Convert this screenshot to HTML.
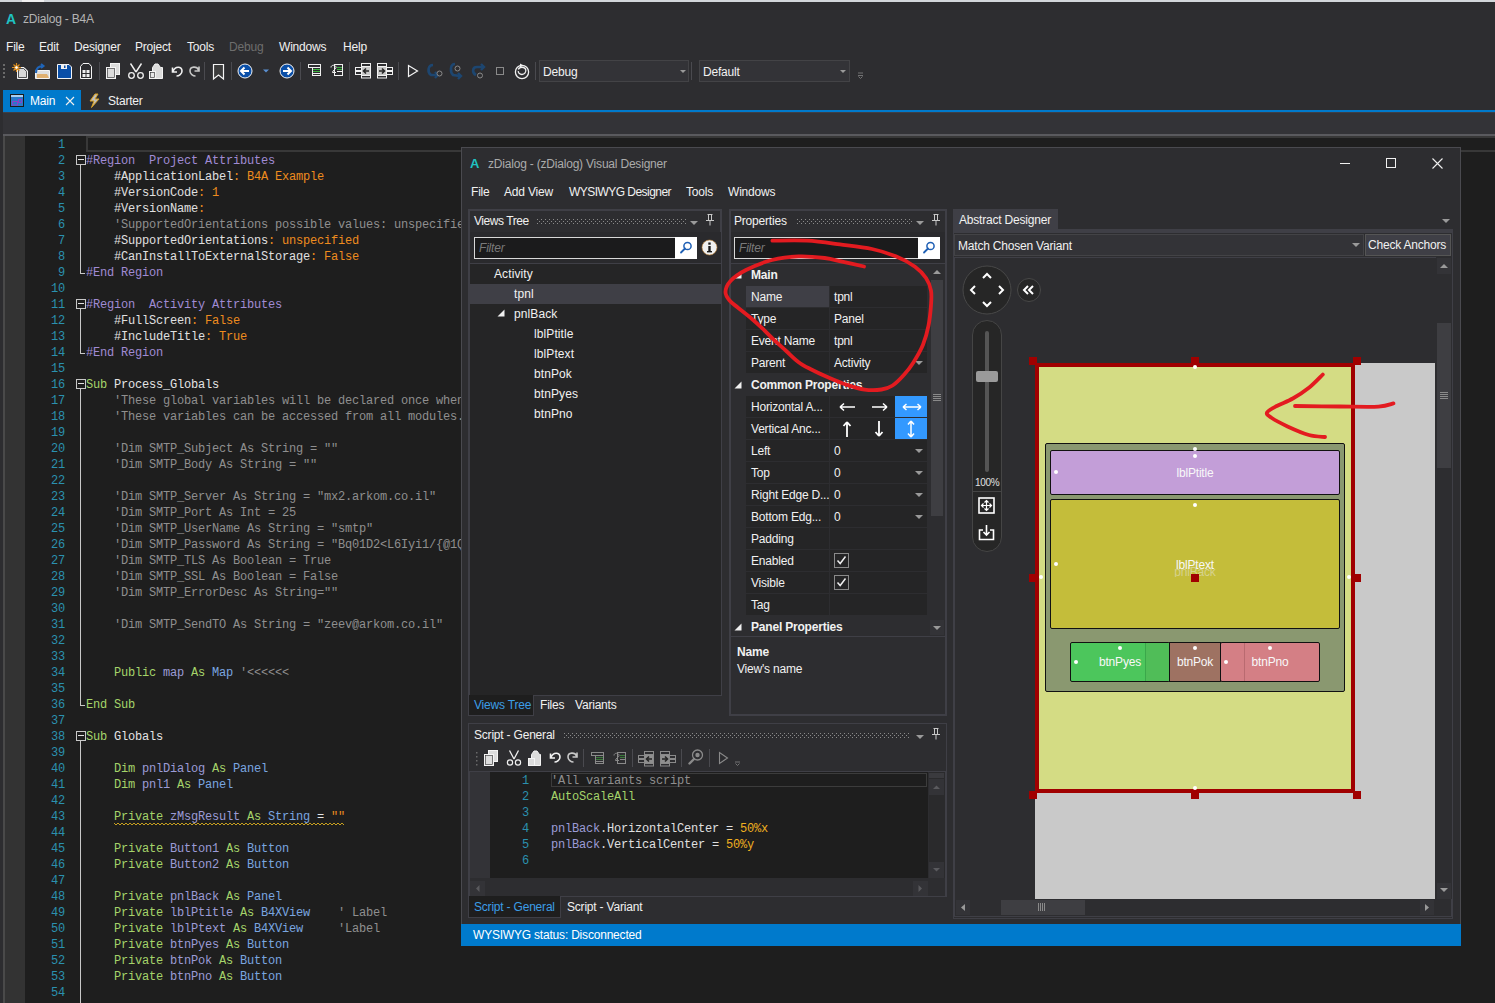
<!DOCTYPE html><html><head><meta charset="utf-8"><style>
*{margin:0;padding:0;box-sizing:border-box}
html,body{width:1495px;height:1003px;overflow:hidden;background:#2d2d30;position:relative}
body div, body svg{position:absolute}
.t{font-family:"Liberation Sans",sans-serif;font-size:12px;line-height:16px;color:#f1f1f1;white-space:pre;letter-spacing:-0.2px}
.m{font-family:"Liberation Mono",monospace;font-size:12px;line-height:16px;white-space:pre;letter-spacing:-0.2px;color:#dcdcdc}
</style></head><body>
<div style="left:0px;top:0px;width:1495px;height:2px;background:#d2d6da"></div>
<div style="left:22px;top:0px;width:22px;height:2px;background:#f0f0f0"></div>
<div class="t" style="left:6px;top:11px;color:#1fc2c2;font-weight:bold;font-size:14px">A</div>
<div class="t" style="left:23px;top:11px;color:#b4b4b4">zDialog - B4A</div>
<div class="t" style="left:6px;top:39px;">File</div>
<div class="t" style="left:39px;top:39px;">Edit</div>
<div class="t" style="left:74px;top:39px;">Designer</div>
<div class="t" style="left:135px;top:39px;">Project</div>
<div class="t" style="left:187px;top:39px;">Tools</div>
<div class="t" style="left:229px;top:39px;color:#6d6d6d">Debug</div>
<div class="t" style="left:279px;top:39px;">Windows</div>
<div class="t" style="left:343px;top:39px;">Help</div>
<div style="left:3px;top:90px;width:78px;height:22px;background:#007acc"></div>
<div style="left:3px;top:110px;width:1492px;height:2px;background:#007acc"></div>
<div class="t" style="left:30px;top:93px;color:#ffffff">Main</div>
<svg style="left:65px;top:96px" width="10" height="10"><path d="M1 1L9 9M9 1L1 9" stroke="#f0f0f0" stroke-width="1.1"/></svg>
<div class="t" style="left:108px;top:93px;color:#f1f1f1">Starter</div>
<div style="left:3px;top:112px;width:1492px;height:24px;background:#333337"></div>
<div style="left:3px;top:112px;width:1492px;height:1px;background:#3f3f46"></div>
<div style="left:3px;top:134px;width:1492px;height:2px;background:#5a5a5e"></div>
<div style="left:3px;top:136px;width:1492px;height:867px;background:#1e1e1e"></div>
<div style="left:3px;top:136px;width:2px;height:867px;background:#4a4a4a"></div>
<div style="left:5px;top:136px;width:20px;height:867px;background:#333333"></div>
<div style="left:86px;top:136px;width:1409px;height:16px;border:2px solid #383838;border-right:none"></div>
<div style="left:0;top:137px;width:461px;height:866px;overflow:hidden">
<div class="m" style="left:0;top:0px;width:65px;text-align:right;color:#2b91af">1</div>
<div class="m" style="left:0;top:16px;width:65px;text-align:right;color:#2b91af">2</div>
<div class="m" style="left:86px;top:16px"><span style="color:#a08bd4">#Region  Project Attributes</span></div>
<div class="m" style="left:0;top:32px;width:65px;text-align:right;color:#2b91af">3</div>
<div class="m" style="left:86px;top:32px"><span style="color:#e0e0e0">    #ApplicationLabel</span><span style="color:#ee8c1e">: B4A Example</span></div>
<div class="m" style="left:0;top:48px;width:65px;text-align:right;color:#2b91af">4</div>
<div class="m" style="left:86px;top:48px"><span style="color:#e0e0e0">    #VersionCode</span><span style="color:#ee8c1e">: 1</span></div>
<div class="m" style="left:0;top:64px;width:65px;text-align:right;color:#2b91af">5</div>
<div class="m" style="left:86px;top:64px"><span style="color:#e0e0e0">    #VersionName</span><span style="color:#ee8c1e">:</span></div>
<div class="m" style="left:0;top:80px;width:65px;text-align:right;color:#2b91af">6</div>
<div class="m" style="left:86px;top:80px"><span style="color:#8f8f8f">    &#x27;SupportedOrientations possible values: unspecified, landscape or portrait.</span></div>
<div class="m" style="left:0;top:96px;width:65px;text-align:right;color:#2b91af">7</div>
<div class="m" style="left:86px;top:96px"><span style="color:#e0e0e0">    #SupportedOrientations</span><span style="color:#ee8c1e">: unspecified</span></div>
<div class="m" style="left:0;top:112px;width:65px;text-align:right;color:#2b91af">8</div>
<div class="m" style="left:86px;top:112px"><span style="color:#e0e0e0">    #CanInstallToExternalStorage</span><span style="color:#ee8c1e">: False</span></div>
<div class="m" style="left:0;top:128px;width:65px;text-align:right;color:#2b91af">9</div>
<div class="m" style="left:86px;top:128px"><span style="color:#a08bd4">#End Region</span></div>
<div class="m" style="left:0;top:144px;width:65px;text-align:right;color:#2b91af">10</div>
<div class="m" style="left:0;top:160px;width:65px;text-align:right;color:#2b91af">11</div>
<div class="m" style="left:86px;top:160px"><span style="color:#a08bd4">#Region  Activity Attributes</span></div>
<div class="m" style="left:0;top:176px;width:65px;text-align:right;color:#2b91af">12</div>
<div class="m" style="left:86px;top:176px"><span style="color:#e0e0e0">    #FullScreen</span><span style="color:#ee8c1e">: False</span></div>
<div class="m" style="left:0;top:192px;width:65px;text-align:right;color:#2b91af">13</div>
<div class="m" style="left:86px;top:192px"><span style="color:#e0e0e0">    #IncludeTitle</span><span style="color:#ee8c1e">: True</span></div>
<div class="m" style="left:0;top:208px;width:65px;text-align:right;color:#2b91af">14</div>
<div class="m" style="left:86px;top:208px"><span style="color:#a08bd4">#End Region</span></div>
<div class="m" style="left:0;top:224px;width:65px;text-align:right;color:#2b91af">15</div>
<div class="m" style="left:0;top:240px;width:65px;text-align:right;color:#2b91af">16</div>
<div class="m" style="left:86px;top:240px"><span style="color:#a5d46a">Sub </span><span style="color:#e4e4e4">Process_Globals</span></div>
<div class="m" style="left:0;top:256px;width:65px;text-align:right;color:#2b91af">17</div>
<div class="m" style="left:86px;top:256px"><span style="color:#8f8f8f">    &#x27;These global variables will be declared once when the application starts.</span></div>
<div class="m" style="left:0;top:272px;width:65px;text-align:right;color:#2b91af">18</div>
<div class="m" style="left:86px;top:272px"><span style="color:#8f8f8f">    &#x27;These variables can be accessed from all modules.</span></div>
<div class="m" style="left:0;top:288px;width:65px;text-align:right;color:#2b91af">19</div>
<div class="m" style="left:0;top:304px;width:65px;text-align:right;color:#2b91af">20</div>
<div class="m" style="left:86px;top:304px"><span style="color:#8f8f8f">    &#x27;Dim SMTP_Subject As String = &quot;&quot;</span></div>
<div class="m" style="left:0;top:320px;width:65px;text-align:right;color:#2b91af">21</div>
<div class="m" style="left:86px;top:320px"><span style="color:#8f8f8f">    &#x27;Dim SMTP_Body As String = &quot;&quot;</span></div>
<div class="m" style="left:0;top:336px;width:65px;text-align:right;color:#2b91af">22</div>
<div class="m" style="left:0;top:352px;width:65px;text-align:right;color:#2b91af">23</div>
<div class="m" style="left:86px;top:352px"><span style="color:#8f8f8f">    &#x27;Dim SMTP_Server As String = &quot;mx2.arkom.co.il&quot;</span></div>
<div class="m" style="left:0;top:368px;width:65px;text-align:right;color:#2b91af">24</div>
<div class="m" style="left:86px;top:368px"><span style="color:#8f8f8f">    &#x27;Dim SMTP_Port As Int = 25</span></div>
<div class="m" style="left:0;top:384px;width:65px;text-align:right;color:#2b91af">25</div>
<div class="m" style="left:86px;top:384px"><span style="color:#8f8f8f">    &#x27;Dim SMTP_UserName As String = &quot;smtp&quot;</span></div>
<div class="m" style="left:0;top:400px;width:65px;text-align:right;color:#2b91af">26</div>
<div class="m" style="left:86px;top:400px"><span style="color:#8f8f8f">    &#x27;Dim SMTP_Password As String = &quot;Bq01D2&lt;L6Iyi1/{@1Q&quot;</span></div>
<div class="m" style="left:0;top:416px;width:65px;text-align:right;color:#2b91af">27</div>
<div class="m" style="left:86px;top:416px"><span style="color:#8f8f8f">    &#x27;Dim SMTP_TLS As Boolean = True</span></div>
<div class="m" style="left:0;top:432px;width:65px;text-align:right;color:#2b91af">28</div>
<div class="m" style="left:86px;top:432px"><span style="color:#8f8f8f">    &#x27;Dim SMTP_SSL As Boolean = False</span></div>
<div class="m" style="left:0;top:448px;width:65px;text-align:right;color:#2b91af">29</div>
<div class="m" style="left:86px;top:448px"><span style="color:#8f8f8f">    &#x27;Dim SMTP_ErrorDesc As String=&quot;&quot;</span></div>
<div class="m" style="left:0;top:464px;width:65px;text-align:right;color:#2b91af">30</div>
<div class="m" style="left:0;top:480px;width:65px;text-align:right;color:#2b91af">31</div>
<div class="m" style="left:86px;top:480px"><span style="color:#8f8f8f">    &#x27;Dim SMTP_SendTO As String = &quot;zeev@arkom.co.il&quot;</span></div>
<div class="m" style="left:0;top:496px;width:65px;text-align:right;color:#2b91af">32</div>
<div class="m" style="left:0;top:512px;width:65px;text-align:right;color:#2b91af">33</div>
<div class="m" style="left:0;top:528px;width:65px;text-align:right;color:#2b91af">34</div>
<div class="m" style="left:86px;top:528px"><span style="color:#a5d46a">    Public </span><span style="color:#9b9bd6">map </span><span style="color:#a5d46a">As </span><span style="color:#7aa6e0">Map </span><span style="color:#8f8f8f">&#x27;&lt;&lt;&lt;&lt;&lt;&lt;</span></div>
<div class="m" style="left:0;top:544px;width:65px;text-align:right;color:#2b91af">35</div>
<div class="m" style="left:0;top:560px;width:65px;text-align:right;color:#2b91af">36</div>
<div class="m" style="left:86px;top:560px"><span style="color:#a5d46a">End Sub</span></div>
<div class="m" style="left:0;top:576px;width:65px;text-align:right;color:#2b91af">37</div>
<div class="m" style="left:0;top:592px;width:65px;text-align:right;color:#2b91af">38</div>
<div class="m" style="left:86px;top:592px"><span style="color:#a5d46a">Sub </span><span style="color:#e4e4e4">Globals</span></div>
<div class="m" style="left:0;top:608px;width:65px;text-align:right;color:#2b91af">39</div>
<div class="m" style="left:0;top:624px;width:65px;text-align:right;color:#2b91af">40</div>
<div class="m" style="left:86px;top:624px"><span style="color:#a5d46a">    Dim </span><span style="color:#9b9bd6">pnlDialog </span><span style="color:#a5d46a">As </span><span style="color:#7aa6e0">Panel</span></div>
<div class="m" style="left:0;top:640px;width:65px;text-align:right;color:#2b91af">41</div>
<div class="m" style="left:86px;top:640px"><span style="color:#a5d46a">    Dim </span><span style="color:#9b9bd6">pnl1 </span><span style="color:#a5d46a">As </span><span style="color:#7aa6e0">Panel</span></div>
<div class="m" style="left:0;top:656px;width:65px;text-align:right;color:#2b91af">42</div>
<div class="m" style="left:0;top:672px;width:65px;text-align:right;color:#2b91af">43</div>
<div class="m" style="left:86px;top:672px"><span style="color:#a5d46a">    Private </span><span style="color:#9b9bd6">zMsgResult </span><span style="color:#a5d46a">As </span><span style="color:#7aa6e0">String </span><span style="color:#e4e4e4">= </span><span style="color:#ee8c1e">&quot;&quot;</span></div>
<div class="m" style="left:0;top:688px;width:65px;text-align:right;color:#2b91af">44</div>
<div class="m" style="left:0;top:704px;width:65px;text-align:right;color:#2b91af">45</div>
<div class="m" style="left:86px;top:704px"><span style="color:#a5d46a">    Private </span><span style="color:#9b9bd6">Button1 </span><span style="color:#a5d46a">As </span><span style="color:#7aa6e0">Button</span></div>
<div class="m" style="left:0;top:720px;width:65px;text-align:right;color:#2b91af">46</div>
<div class="m" style="left:86px;top:720px"><span style="color:#a5d46a">    Private </span><span style="color:#9b9bd6">Button2 </span><span style="color:#a5d46a">As </span><span style="color:#7aa6e0">Button</span></div>
<div class="m" style="left:0;top:736px;width:65px;text-align:right;color:#2b91af">47</div>
<div class="m" style="left:0;top:752px;width:65px;text-align:right;color:#2b91af">48</div>
<div class="m" style="left:86px;top:752px"><span style="color:#a5d46a">    Private </span><span style="color:#9b9bd6">pnlBack </span><span style="color:#a5d46a">As </span><span style="color:#7aa6e0">Panel</span></div>
<div class="m" style="left:0;top:768px;width:65px;text-align:right;color:#2b91af">49</div>
<div class="m" style="left:86px;top:768px"><span style="color:#a5d46a">    Private </span><span style="color:#9b9bd6">lblPtitle </span><span style="color:#a5d46a">As </span><span style="color:#7aa6e0">B4XView</span><span style="color:#8f8f8f">    &#x27; Label</span></div>
<div class="m" style="left:0;top:784px;width:65px;text-align:right;color:#2b91af">50</div>
<div class="m" style="left:86px;top:784px"><span style="color:#a5d46a">    Private </span><span style="color:#9b9bd6">lblPtext </span><span style="color:#a5d46a">As </span><span style="color:#7aa6e0">B4XView</span><span style="color:#8f8f8f">     &#x27;Label</span></div>
<div class="m" style="left:0;top:800px;width:65px;text-align:right;color:#2b91af">51</div>
<div class="m" style="left:86px;top:800px"><span style="color:#a5d46a">    Private </span><span style="color:#9b9bd6">btnPyes </span><span style="color:#a5d46a">As </span><span style="color:#7aa6e0">Button</span></div>
<div class="m" style="left:0;top:816px;width:65px;text-align:right;color:#2b91af">52</div>
<div class="m" style="left:86px;top:816px"><span style="color:#a5d46a">    Private </span><span style="color:#9b9bd6">btnPok </span><span style="color:#a5d46a">As </span><span style="color:#7aa6e0">Button</span></div>
<div class="m" style="left:0;top:832px;width:65px;text-align:right;color:#2b91af">53</div>
<div class="m" style="left:86px;top:832px"><span style="color:#a5d46a">    Private </span><span style="color:#9b9bd6">btnPno </span><span style="color:#a5d46a">As </span><span style="color:#7aa6e0">Button</span></div>
<div class="m" style="left:0;top:848px;width:65px;text-align:right;color:#2b91af">54</div>
<div style="left:76px;top:18px;width:10px;height:10px;border:1px solid #c8c8c8;background:#1e1e1e"></div>
<div style="left:78px;top:22px;width:6px;height:1px;background:#e0e0e0"></div>
<div style="left:80px;top:28px;width:1px;height:108px;background:#c8c8c8"></div>
<div style="left:80px;top:136px;width:5px;height:1px;background:#c8c8c8"></div>
<div style="left:76px;top:162px;width:10px;height:10px;border:1px solid #c8c8c8;background:#1e1e1e"></div>
<div style="left:78px;top:166px;width:6px;height:1px;background:#e0e0e0"></div>
<div style="left:80px;top:172px;width:1px;height:44px;background:#c8c8c8"></div>
<div style="left:80px;top:216px;width:5px;height:1px;background:#c8c8c8"></div>
<div style="left:76px;top:242px;width:10px;height:10px;border:1px solid #c8c8c8;background:#1e1e1e"></div>
<div style="left:78px;top:246px;width:6px;height:1px;background:#e0e0e0"></div>
<div style="left:80px;top:252px;width:1px;height:316px;background:#c8c8c8"></div>
<div style="left:80px;top:568px;width:5px;height:1px;background:#c8c8c8"></div>
<div style="left:76px;top:594px;width:10px;height:10px;border:1px solid #c8c8c8;background:#1e1e1e"></div>
<div style="left:78px;top:598px;width:6px;height:1px;background:#e0e0e0"></div>
<div style="left:80px;top:604px;width:1px;height:263px;background:#c8c8c8"></div>
<svg style="left:114px;top:685px" width="231" height="4"><path d="M0,1 L2,3 L4,1 L6,3 L8,1 L10,3 L12,1 L14,3 L16,1 L18,3 L20,1 L22,3 L24,1 L26,3 L28,1 L30,3 L32,1 L34,3 L36,1 L38,3 L40,1 L42,3 L44,1 L46,3 L48,1 L50,3 L52,1 L54,3 L56,1 L58,3 L60,1 L62,3 L64,1 L66,3 L68,1 L70,3 L72,1 L74,3 L76,1 L78,3 L80,1 L82,3 L84,1 L86,3 L88,1 L90,3 L92,1 L94,3 L96,1 L98,3 L100,1 L102,3 L104,1 L106,3 L108,1 L110,3 L112,1 L114,3 L116,1 L118,3 L120,1 L122,3 L124,1 L126,3 L128,1 L130,3 L132,1 L134,3 L136,1 L138,3 L140,1 L142,3 L144,1 L146,3 L148,1 L150,3 L152,1 L154,3 L156,1 L158,3 L160,1 L162,3 L164,1 L166,3 L168,1 L170,3 L172,1 L174,3 L176,1 L178,3 L180,1 L182,3 L184,1 L186,3 L188,1 L190,3 L192,1 L194,3 L196,1 L198,3 L200,1 L202,3 L204,1 L206,3 L208,1 L210,3 L212,1 L214,3 L216,1 L218,3 L220,1 L222,3 L224,1 L226,3 L228,1 L230,3" stroke="#c8a020" fill="none" stroke-width="1"/></svg>
</div>
<div style="left:461px;top:147px;width:1000px;height:799px;background:#2d2d30;border:1px solid #4a4a4f"></div>
<div class="t" style="left:470px;top:156px;color:#1fc2c2;font-weight:bold;font-size:13px">A</div>
<div class="t" style="left:488px;top:156px;color:#ababab">zDialog - (zDialog) Visual Designer</div>
<div style="left:1340px;top:163px;width:10px;height:1px;background:#f0f0f0"></div>
<div style="left:1386px;top:158px;width:10px;height:10px;border:1px solid #f0f0f0"></div>
<svg style="left:1432px;top:158px" width="11" height="11"><path d="M0.5 0.5L10.5 10.5M10.5 0.5L0.5 10.5" stroke="#f0f0f0" stroke-width="1.1"/></svg>
<div class="t" style="left:471px;top:184px;">File</div>
<div class="t" style="left:504px;top:184px;">Add View</div>
<div class="t" style="left:569px;top:184px;letter-spacing:-0.54px">WYSIWYG Designer</div>
<div class="t" style="left:686px;top:184px;">Tools</div>
<div class="t" style="left:728px;top:184px;">Windows</div>
<div style="left:468px;top:209px;width:254px;height:487px;background:#2d2d30;border:2px solid #3f3f46"></div>
<div class="t" style="left:474px;top:213px;letter-spacing:-0.45px">Views Tree</div>
<svg style="left:537px;top:219px" width="150" height="5"><defs><pattern id="dp537219" width="4" height="4" patternUnits="userSpaceOnUse"><rect x="0" y="0" width="1" height="1" fill="#8a8a8a"/><rect x="2" y="2" width="1" height="1" fill="#8a8a8a"/></pattern></defs><rect width="150" height="5" fill="url(#dp537219)"/></svg>
<div style="left:690px;top:221px;width:0;height:0;border-left:4px solid transparent;border-right:4px solid transparent;border-top:4px solid #9a9a9a"></div>
<svg style="left:705px;top:214px" width="10" height="12"><path d="M2.5 0.5H7.5M3.5 0.5V6.5M6.5 0.5V6.5M1 6.5H9M5 6.5V11.5" stroke="#c8c8c8" stroke-width="1" fill="none"/></svg>
<div style="left:470px;top:232px;width:251px;height:31px;background:#2a2a2d"></div>
<div style="left:474px;top:237px;width:223px;height:22px;background:#1b1b1c;border:1px solid #d8d8d8"></div>
<div class="t" style="left:479px;top:240px;color:#7a7a7a;font-style:italic">Filter</div>
<div style="left:675px;top:237px;width:22px;height:22px;background:#ffffff"></div>
<svg style="left:677px;top:239px" width="18" height="18"><circle cx="10.5" cy="7" r="3.6" stroke="#1e5fb4" stroke-width="1.5" fill="none"/><path d="M8 9.5L4 13.5" stroke="#1e5fb4" stroke-width="1.8" stroke-linecap="round"/></svg>
<svg style="left:701px;top:239px" width="18" height="18"><circle cx="8.5" cy="8.5" r="7.5" fill="#f0f0f0" stroke="#c08030" stroke-width="0.6"/><rect x="7.3" y="7" width="2.4" height="6" fill="#1a1a1a"/><rect x="7.3" y="3.5" width="2.4" height="2.2" fill="#1a1a1a"/><rect x="6" y="12" width="5" height="1.4" fill="#1a1a1a"/></svg>
<div style="left:470px;top:263px;width:251px;height:1px;background:#3f3f46"></div>
<div style="left:470px;top:264px;width:251px;height:431px;background:#252526"></div>
<div style="left:470px;top:284px;width:251px;height:20px;background:#3f3f46"></div>
<div class="t" style="left:494px;top:266px;letter-spacing:0.1px">Activity</div>
<div class="t" style="left:514px;top:286px;letter-spacing:0.1px">tpnl</div>
<div class="t" style="left:514px;top:306px;letter-spacing:0.1px">pnlBack</div>
<div class="t" style="left:534px;top:326px;letter-spacing:0.1px">lblPtitle</div>
<div class="t" style="left:534px;top:346px;letter-spacing:0.1px">lblPtext</div>
<div class="t" style="left:534px;top:366px;letter-spacing:0.1px">btnPok</div>
<div class="t" style="left:534px;top:386px;letter-spacing:0.1px">btnPyes</div>
<div class="t" style="left:534px;top:406px;letter-spacing:0.1px">btnPno</div>
<svg style="left:497px;top:309px" width="9" height="9"><path d="M7.5 0.5V7.5H0.5Z" fill="#f0f0f0"/></svg>
<div style="left:468px;top:695px;width:66px;height:21px;background:#1e1e1e;border:1px solid #3f3f46;border-top:none"></div>
<div class="t" style="left:474px;top:697px;color:#3c9de6">Views Tree</div>
<div class="t" style="left:540px;top:697px;">Files</div>
<div class="t" style="left:575px;top:697px;">Variants</div>
<div style="left:729px;top:209px;width:218px;height:507px;background:#2d2d30;border:2px solid #3f3f46"></div>
<div class="t" style="left:734px;top:213px;">Properties</div>
<svg style="left:797px;top:219px" width="115" height="5"><defs><pattern id="dp797219" width="4" height="4" patternUnits="userSpaceOnUse"><rect x="0" y="0" width="1" height="1" fill="#8a8a8a"/><rect x="2" y="2" width="1" height="1" fill="#8a8a8a"/></pattern></defs><rect width="115" height="5" fill="url(#dp797219)"/></svg>
<div style="left:916px;top:221px;width:0;height:0;border-left:4px solid transparent;border-right:4px solid transparent;border-top:4px solid #9a9a9a"></div>
<svg style="left:931px;top:214px" width="10" height="12"><path d="M2.5 0.5H7.5M3.5 0.5V6.5M6.5 0.5V6.5M1 6.5H9M5 6.5V11.5" stroke="#c8c8c8" stroke-width="1" fill="none"/></svg>
<div style="left:731px;top:232px;width:214px;height:31px;background:#2a2a2d"></div>
<div style="left:734px;top:237px;width:185px;height:22px;background:#1b1b1c;border:1px solid #d8d8d8"></div>
<div class="t" style="left:739px;top:240px;color:#7a7a7a;font-style:italic">Filter</div>
<div style="left:918px;top:237px;width:22px;height:22px;background:#ffffff"></div>
<svg style="left:920px;top:239px" width="18" height="18"><circle cx="10.5" cy="7" r="3.6" stroke="#1e5fb4" stroke-width="1.5" fill="none"/><path d="M8 9.5L4 13.5" stroke="#1e5fb4" stroke-width="1.8" stroke-linecap="round"/></svg>
<div style="left:731px;top:263px;width:214px;height:1px;background:#3f3f46"></div>
<div style="left:731px;top:264px;width:199px;height:371px;background:#2d2d30"></div>
<svg style="left:734px;top:271px" width="9" height="9"><path d="M7.5 0.5V7.5H0.5Z" fill="#f0f0f0"/></svg>
<div class="t" style="left:751px;top:267px;font-weight:bold">Main</div>
<div style="left:746px;top:286px;width:83px;height:21px;background:#3f3f46"></div>
<div style="left:830px;top:286px;width:97px;height:21px;background:#252526"></div>
<div class="t" style="left:751px;top:289px;">Name</div>
<div class="t" style="left:834px;top:289px;">tpnl</div>
<div style="left:746px;top:308px;width:83px;height:21px;background:#252526"></div>
<div style="left:830px;top:308px;width:97px;height:21px;background:#252526"></div>
<div class="t" style="left:751px;top:311px;">Type</div>
<div class="t" style="left:834px;top:311px;">Panel</div>
<div style="left:746px;top:330px;width:83px;height:21px;background:#252526"></div>
<div style="left:830px;top:330px;width:97px;height:21px;background:#252526"></div>
<div class="t" style="left:751px;top:333px;">Event Name</div>
<div class="t" style="left:834px;top:333px;">tpnl</div>
<div style="left:746px;top:352px;width:83px;height:21px;background:#252526"></div>
<div style="left:830px;top:352px;width:97px;height:21px;background:#252526"></div>
<div class="t" style="left:751px;top:355px;">Parent</div>
<div class="t" style="left:834px;top:355px;">Activity</div>
<div style="left:915px;top:361px;width:0;height:0;border-left:4px solid transparent;border-right:4px solid transparent;border-top:4px solid #9a9a9a"></div>
<svg style="left:734px;top:381px" width="9" height="9"><path d="M7.5 0.5V7.5H0.5Z" fill="#f0f0f0"/></svg>
<div class="t" style="left:751px;top:377px;font-weight:bold">Common Properties</div>
<div style="left:746px;top:396px;width:83px;height:21px;background:#252526"></div>
<div style="left:830px;top:396px;width:97px;height:21px;background:#252526"></div>
<div class="t" style="left:751px;top:399px;">Horizontal A...</div>
<div style="left:895px;top:396px;width:32px;height:21px;background:#3399ff"></div>
<svg style="left:838px;top:401px" width="90" height="12"><path d="M2 6H17M2 6L6 2.5M2 6L6 9.5" stroke="#fff" stroke-width="1.5" fill="none"/><path d="M34 6H49M49 6L45 2.5M49 6L45 9.5" stroke="#fff" stroke-width="1.5" fill="none"/><path d="M65 6H83M65 6L68.5 3M65 6L68.5 9M83 6L79.5 3M83 6L79.5 9" stroke="#fff" stroke-width="1.5" fill="none"/></svg>
<div style="left:746px;top:418px;width:83px;height:21px;background:#252526"></div>
<div style="left:830px;top:418px;width:97px;height:21px;background:#252526"></div>
<div class="t" style="left:751px;top:421px;">Vertical Anc...</div>
<div style="left:895px;top:418px;width:32px;height:21px;background:#3399ff"></div>
<svg style="left:838px;top:420px" width="90" height="18"><path d="M9 2V17M9 2L5.5 6M9 2L12.5 6" stroke="#fff" stroke-width="1.8" fill="none"/><path d="M41 1V16M41 16L37.5 12M41 16L44.5 12" stroke="#fff" stroke-width="1.8" fill="none"/><path d="M73 1V17M73 1L70 4.5M73 1L76 4.5M73 17L70 13.5M73 17L76 13.5" stroke="#fff" stroke-width="1.5" fill="none"/></svg>
<div style="left:746px;top:440px;width:83px;height:21px;background:#252526"></div>
<div style="left:830px;top:440px;width:97px;height:21px;background:#252526"></div>
<div class="t" style="left:751px;top:443px;">Left</div>
<div class="t" style="left:834px;top:443px;">0</div>
<div style="left:915px;top:449px;width:0;height:0;border-left:4px solid transparent;border-right:4px solid transparent;border-top:4px solid #9a9a9a"></div>
<div style="left:746px;top:462px;width:83px;height:21px;background:#252526"></div>
<div style="left:830px;top:462px;width:97px;height:21px;background:#252526"></div>
<div class="t" style="left:751px;top:465px;">Top</div>
<div class="t" style="left:834px;top:465px;">0</div>
<div style="left:915px;top:471px;width:0;height:0;border-left:4px solid transparent;border-right:4px solid transparent;border-top:4px solid #9a9a9a"></div>
<div style="left:746px;top:484px;width:83px;height:21px;background:#252526"></div>
<div style="left:830px;top:484px;width:97px;height:21px;background:#252526"></div>
<div class="t" style="left:751px;top:487px;">Right Edge D...</div>
<div class="t" style="left:834px;top:487px;">0</div>
<div style="left:915px;top:493px;width:0;height:0;border-left:4px solid transparent;border-right:4px solid transparent;border-top:4px solid #9a9a9a"></div>
<div style="left:746px;top:506px;width:83px;height:21px;background:#252526"></div>
<div style="left:830px;top:506px;width:97px;height:21px;background:#252526"></div>
<div class="t" style="left:751px;top:509px;">Bottom Edg...</div>
<div class="t" style="left:834px;top:509px;">0</div>
<div style="left:915px;top:515px;width:0;height:0;border-left:4px solid transparent;border-right:4px solid transparent;border-top:4px solid #9a9a9a"></div>
<div style="left:746px;top:528px;width:83px;height:21px;background:#252526"></div>
<div style="left:830px;top:528px;width:97px;height:21px;background:#252526"></div>
<div class="t" style="left:751px;top:531px;">Padding</div>
<div class="t" style="left:834px;top:531px;"></div>
<div style="left:746px;top:550px;width:83px;height:21px;background:#252526"></div>
<div style="left:830px;top:550px;width:97px;height:21px;background:#252526"></div>
<div class="t" style="left:751px;top:553px;">Enabled</div>
<svg style="left:834px;top:553px" width="16" height="16"><rect x="0.5" y="0.5" width="14" height="14" fill="none" stroke="#8a8a8a"/><path d="M3.5 7.5L6.2 10.5L11.5 3.5" stroke="#f0f0f0" stroke-width="1.5" fill="none"/></svg>
<div style="left:746px;top:572px;width:83px;height:21px;background:#252526"></div>
<div style="left:830px;top:572px;width:97px;height:21px;background:#252526"></div>
<div class="t" style="left:751px;top:575px;">Visible</div>
<svg style="left:834px;top:575px" width="16" height="16"><rect x="0.5" y="0.5" width="14" height="14" fill="none" stroke="#8a8a8a"/><path d="M3.5 7.5L6.2 10.5L11.5 3.5" stroke="#f0f0f0" stroke-width="1.5" fill="none"/></svg>
<div style="left:746px;top:594px;width:83px;height:21px;background:#252526"></div>
<div style="left:830px;top:594px;width:97px;height:21px;background:#252526"></div>
<div class="t" style="left:751px;top:597px;">Tag</div>
<div class="t" style="left:834px;top:597px;"></div>
<svg style="left:734px;top:623px" width="9" height="9"><path d="M7.5 0.5V7.5H0.5Z" fill="#f0f0f0"/></svg>
<div class="t" style="left:751px;top:619px;font-weight:bold">Panel Properties</div>
<div style="left:930px;top:264px;width:14px;height:371px;background:#2d2d30"></div>
<div style="left:931px;top:280px;width:12px;height:236px;background:#3e3e42"></div>
<svg style="left:931px;top:268px" width="12" height="8"><path d="M2 6L6 2L10 6Z" fill="#9a9a9a"/></svg>
<div style="left:930px;top:620px;width:14px;height:15px;background:#333337"></div>
<svg style="left:931px;top:624px" width="12" height="8"><path d="M2 2L6 6L10 2Z" fill="#9a9a9a"/></svg>
<div style="left:933px;top:394px;width:8px;height:1px;background:#8a8a8a"></div>
<div style="left:933px;top:396px;width:8px;height:1px;background:#8a8a8a"></div>
<div style="left:933px;top:398px;width:8px;height:1px;background:#8a8a8a"></div>
<div style="left:933px;top:400px;width:8px;height:1px;background:#8a8a8a"></div>
<div style="left:731px;top:636px;width:214px;height:1px;background:#3f3f46"></div>
<div class="t" style="left:737px;top:644px;font-weight:bold">Name</div>
<div class="t" style="left:737px;top:661px;">View's name</div>
<div style="left:468px;top:723px;width:479px;height:174px;background:#2d2d30;border:1px solid #3f3f46"></div>
<div class="t" style="left:474px;top:727px;">Script - General</div>
<svg style="left:564px;top:733px" width="345" height="5"><defs><pattern id="dp564733" width="4" height="4" patternUnits="userSpaceOnUse"><rect x="0" y="0" width="1" height="1" fill="#8a8a8a"/><rect x="2" y="2" width="1" height="1" fill="#8a8a8a"/></pattern></defs><rect width="345" height="5" fill="url(#dp564733)"/></svg>
<div style="left:916px;top:735px;width:0;height:0;border-left:4px solid transparent;border-right:4px solid transparent;border-top:4px solid #9a9a9a"></div>
<svg style="left:931px;top:728px" width="10" height="12"><path d="M2.5 0.5H7.5M3.5 0.5V6.5M6.5 0.5V6.5M1 6.5H9M5 6.5V11.5" stroke="#c8c8c8" stroke-width="1" fill="none"/></svg>
<div style="left:469px;top:771px;width:477px;height:126px;background:#2d2d30;border:1px solid #3f3f46"></div>
<div style="left:470px;top:772px;width:20px;height:106px;background:#333337"></div>
<div style="left:490px;top:772px;width:438px;height:106px;background:#1e1e1e"></div>
<div style="left:551px;top:773px;width:376px;height:14px;border:1px solid #3c3c3c"></div>
<div class="m" style="left:490px;top:773px;width:39px;text-align:right;color:#2b91af">1</div>
<div class="m" style="left:551px;top:773px"><span style="color:#8f8f8f">&#x27;All variants script</span></div>
<div class="m" style="left:490px;top:789px;width:39px;text-align:right;color:#2b91af">2</div>
<div class="m" style="left:551px;top:789px"><span style="color:#a5d46a">AutoScaleAll</span></div>
<div class="m" style="left:490px;top:805px;width:39px;text-align:right;color:#2b91af">3</div>
<div class="m" style="left:490px;top:821px;width:39px;text-align:right;color:#2b91af">4</div>
<div class="m" style="left:551px;top:821px"><span style="color:#9b9bd6">pnlBack</span><span style="color:#e0e0e0">.HorizontalCenter = </span><span style="color:#f0b020">50%x</span></div>
<div class="m" style="left:490px;top:837px;width:39px;text-align:right;color:#2b91af">5</div>
<div class="m" style="left:551px;top:837px"><span style="color:#9b9bd6">pnlBack</span><span style="color:#e0e0e0">.VerticalCenter = </span><span style="color:#f0b020">50%y</span></div>
<div class="m" style="left:490px;top:853px;width:39px;text-align:right;color:#2b91af">6</div>
<div style="left:929px;top:772px;width:16px;height:106px;background:#2a2a2c"></div>
<div style="left:929px;top:773px;width:15px;height:5px;background:#3a3a3e"></div>
<div style="left:929px;top:779px;width:15px;height:16px;background:#333337"></div>
<div style="left:929px;top:862px;width:15px;height:16px;background:#333337"></div>
<svg style="left:929px;top:779px" width="15" height="16"><path d="M4 10L7.5 6.5L11 10Z" fill="#5a5a5e"/></svg>
<svg style="left:929px;top:862px" width="15" height="16"><path d="M4 6L7.5 9.5L11 6Z" fill="#5a5a5e"/></svg>
<div style="left:470px;top:878px;width:475px;height:18px;background:#2d2d30"></div>
<div style="left:470px;top:881px;width:15px;height:15px;background:#333337"></div>
<div style="left:913px;top:881px;width:15px;height:15px;background:#333337"></div>
<svg style="left:470px;top:881px" width="15" height="15"><path d="M9.5 4L6 7.5L9.5 11Z" fill="#5a5a5e"/></svg>
<svg style="left:913px;top:881px" width="15" height="15"><path d="M5.5 4L9 7.5L5.5 11Z" fill="#5a5a5e"/></svg>
<div style="left:468px;top:896px;width:93px;height:22px;background:#1e1e1e;border:1px solid #3f3f46;border-top:none"></div>
<div class="t" style="left:474px;top:899px;color:#3c9de6">Script - General</div>
<div class="t" style="left:567px;top:899px;">Script - Variant</div>
<div style="left:953px;top:209px;width:105px;height:20px;background:#3f3f46"></div>
<div class="t" style="left:959px;top:212px;">Abstract Designer</div>
<div style="left:1442px;top:219px;width:0;height:0;border-left:4px solid transparent;border-right:4px solid transparent;border-top:4px solid #9a9a9a"></div>
<div style="left:953px;top:229px;width:500px;height:690px;background:#2d2d30;border:1px solid #3f3f46;border-top:4px solid #3f3f46"></div>
<div style="left:954px;top:234px;width:410px;height:22px;background:#333337;border:1px solid #434346"></div>
<div class="t" style="left:958px;top:238px;">Match Chosen Variant</div>
<div style="left:1352px;top:243px;width:0;height:0;border-left:4px solid transparent;border-right:4px solid transparent;border-top:4px solid #9a9a9a"></div>
<div style="left:1365px;top:234px;width:86px;height:22px;background:#3f3f46;border:1px solid #555"></div>
<div class="t" style="left:1368px;top:237px;">Check Anchors</div>
<div style="left:954px;top:257px;width:498px;height:660px;background:#2d2d30;border:1px solid #3f3f46"></div>
<div style="left:1035px;top:363px;width:400px;height:536px;background:#c9c9c9"></div>
<svg style="left:962px;top:265px" width="80" height="52"><circle cx="25" cy="25" r="24" fill="#262626" stroke="#484848"/><path d="M21 13L25 9L29 13M21 37L25 41L29 37M13 21L9 25L13 29M37 21L41 25L37 29" stroke="#fff" stroke-width="2" fill="none"/><circle cx="67" cy="25" r="11.5" fill="#262626" stroke="#484848"/><path d="M66 21L62 25L66 29M71 21L67 25L71 29" stroke="#fff" stroke-width="2" fill="none"/></svg>
<div style="left:972px;top:320px;width:30px;height:232px;background:#262626;border:1px solid #454545;border-radius:15px"></div>
<div style="left:985px;top:331px;width:4px;height:141px;background:#555;border-radius:2px"></div>
<div style="left:976px;top:371px;width:22px;height:11px;background:#9a9a9a;border-radius:2px"></div>
<div class="t" style="left:975px;top:475px;font-size:10px;color:#e0e0e0;letter-spacing:-0.3px">100%</div>
<div style="left:973px;top:491px;width:28px;height:1px;background:#454545"></div>
<svg style="left:978px;top:497px" width="18" height="18"><rect x="1" y="1" width="15" height="15" fill="none" stroke="#fff" stroke-width="1.6"/><path d="M8.5 3.5V13.5M3.5 8.5H13.5M6.5 5.5L8.5 3.5L10.5 5.5M6.5 11.5L8.5 13.5L10.5 11.5M5.5 6.5L3.5 8.5L5.5 10.5M11.5 6.5L13.5 8.5L11.5 10.5" stroke="#fff" stroke-width="1.2" fill="none"/></svg>
<svg style="left:978px;top:524px" width="18" height="18"><path d="M5 6H1.5V15.5H15.5V6H12" stroke="#fff" stroke-width="1.6" fill="none"/><path d="M8.5 1V11M5.5 8L8.5 11L11.5 8" stroke="#fff" stroke-width="1.6" fill="none"/></svg>
<div style="left:1436px;top:257px;width:16px;height:642px;background:#2d2d30"></div>
<div style="left:1437px;top:323px;width:14px;height:145px;background:#3e3e42"></div>
<div style="left:1437px;top:258px;width:14px;height:16px;background:#333337"></div>
<div style="left:1437px;top:883px;width:14px;height:16px;background:#333337"></div>
<svg style="left:1437px;top:261px" width="14" height="10"><path d="M3 7L7 3L11 7Z" fill="#9a9a9a"/></svg>
<svg style="left:1437px;top:885px" width="14" height="10"><path d="M3 3L7 7L11 3Z" fill="#9a9a9a"/></svg>
<div style="left:1440px;top:392px;width:8px;height:1px;background:#8a8a8a"></div>
<div style="left:1440px;top:394px;width:8px;height:1px;background:#8a8a8a"></div>
<div style="left:1440px;top:396px;width:8px;height:1px;background:#8a8a8a"></div>
<div style="left:1440px;top:398px;width:8px;height:1px;background:#8a8a8a"></div>
<div style="left:955px;top:899px;width:481px;height:17px;background:#2d2d30"></div>
<div style="left:1001px;top:900px;width:84px;height:15px;background:#3e3e42"></div>
<div style="left:956px;top:900px;width:14px;height:15px;background:#333337"></div>
<div style="left:1420px;top:900px;width:14px;height:15px;background:#333337"></div>
<svg style="left:956px;top:900px" width="14" height="15"><path d="M9 4L5 7.5L9 11Z" fill="#9a9a9a"/></svg>
<svg style="left:1420px;top:900px" width="14" height="15"><path d="M5 4L9 7.5L5 11Z" fill="#9a9a9a"/></svg>
<div style="left:1038px;top:903px;width:1px;height:8px;background:#8a8a8a"></div>
<div style="left:1040px;top:903px;width:1px;height:8px;background:#8a8a8a"></div>
<div style="left:1042px;top:903px;width:1px;height:8px;background:#8a8a8a"></div>
<div style="left:1044px;top:903px;width:1px;height:8px;background:#8a8a8a"></div>
<div style="left:1035px;top:363px;width:320px;height:430px;background:#d4dc84;border:4px solid #a00000"></div>
<div style="left:1029px;top:357px;width:8px;height:8px;background:#a00000"></div>
<div style="left:1191px;top:357px;width:8px;height:8px;background:#a00000"></div>
<div style="left:1353px;top:357px;width:8px;height:8px;background:#a00000"></div>
<div style="left:1029px;top:574px;width:8px;height:8px;background:#a00000"></div>
<div style="left:1353px;top:574px;width:8px;height:8px;background:#a00000"></div>
<div style="left:1029px;top:791px;width:8px;height:8px;background:#a00000"></div>
<div style="left:1191px;top:791px;width:8px;height:8px;background:#a00000"></div>
<div style="left:1353px;top:791px;width:8px;height:8px;background:#a00000"></div>
<div style="left:1045px;top:443px;width:300px;height:249px;background:#8a9870;border:1px solid #111;border-radius:2px"></div>
<div style="left:1050px;top:450px;width:290px;height:45px;background:#c39ed8;border:1px solid #111;border-radius:2px"></div>
<div class="t" style="left:1050px;top:465px;width:290px;text-align:center;color:#f8f8f8">lblPtitle</div>
<div style="left:1050px;top:499px;width:290px;height:130px;background:#c4bd3a;border:1px solid #111;border-radius:2px"></div>
<div style="left:1150px;top:567px;width:90px;height:10px;overflow:hidden"><div class="t" style="left:0;top:-3px;width:90px;text-align:center;color:#d6d28c">pnlBack</div></div>
<div class="t" style="left:1050px;top:557px;width:290px;text-align:center;color:#f8f8f8">lblPtext</div>
<div style="left:1191px;top:574px;width:8px;height:8px;background:#a00000"></div>
<div style="left:1070px;top:642px;width:100px;height:40px;background:#4cc65c;border:1px solid #111;border-radius:2px"></div>
<div style="left:1146px;top:643px;width:23px;height:38px;background:#50bd58"></div>
<div style="left:1145px;top:643px;width:1px;height:38px;background:#3aa84a"></div>
<div class="t" style="left:1070px;top:654px;width:100px;text-align:center;color:#f8f8f8">btnPyes</div>
<div style="left:1169px;top:642px;width:52px;height:40px;background:#9e7262;border:1px solid #111"></div>
<div class="t" style="left:1169px;top:654px;width:52px;text-align:center;color:#f8f8f8">btnPok</div>
<div style="left:1220px;top:642px;width:100px;height:40px;background:#d47f85;border:1px solid #111;border-radius:2px"></div>
<div style="left:1244px;top:643px;width:1px;height:38px;background:#b96a70"></div>
<div class="t" style="left:1220px;top:654px;width:100px;text-align:center;color:#f8f8f8">btnPno</div>
<div style="left:1193px;top:365px;width:4px;height:4px;background:#fff;border-radius:2px"></div>
<div style="left:1193px;top:447px;width:4px;height:4px;background:#fff;border-radius:2px"></div>
<div style="left:1193px;top:454px;width:4px;height:4px;background:#fff;border-radius:2px"></div>
<div style="left:1054px;top:470px;width:4px;height:4px;background:#fff;border-radius:2px"></div>
<div style="left:1193px;top:503px;width:4px;height:4px;background:#fff;border-radius:2px"></div>
<div style="left:1054px;top:562px;width:4px;height:4px;background:#fff;border-radius:2px"></div>
<div style="left:1193px;top:786px;width:4px;height:4px;background:#fff;border-radius:2px"></div>
<div style="left:1039px;top:575px;width:4px;height:4px;background:#fff;border-radius:2px"></div>
<div style="left:1347px;top:575px;width:4px;height:4px;background:#fff;border-radius:2px"></div>
<div style="left:1118px;top:646px;width:4px;height:4px;background:#fff;border-radius:2px"></div>
<div style="left:1074px;top:660px;width:4px;height:4px;background:#fff;border-radius:2px"></div>
<div style="left:1193px;top:646px;width:4px;height:4px;background:#fff;border-radius:2px"></div>
<div style="left:1224px;top:660px;width:4px;height:4px;background:#fff;border-radius:2px"></div>
<div style="left:1268px;top:646px;width:4px;height:4px;background:#fff;border-radius:2px"></div>
<div style="left:461px;top:924px;width:1000px;height:22px;background:#007acc"></div>
<div class="t" style="left:473px;top:927px;color:#ffffff">WYSIWYG status: Disconnected</div>
<svg style="left:0;top:0" width="1495" height="1003"><g stroke="#e31b20" stroke-width="3.8" fill="none" stroke-linecap="round" stroke-linejoin="round"><path d="M772.4 240.7 C778.2 240.7 795.7 240.1 807.0 240.7 C818.3 241.3 829.2 243.0 840.0 244.4 C850.8 245.8 862.7 247.0 872.0 249.0 C881.3 251.0 888.6 253.4 895.8 256.3 C903.0 259.2 910.0 263.1 915.0 266.7 C920.0 270.3 923.3 274.0 926.0 278.0 C928.7 282.0 930.2 286.1 931.0 290.6 C931.8 295.1 931.4 299.1 931.0 305.0 C930.6 310.9 929.8 319.1 928.5 325.7 C927.2 332.3 925.5 338.7 923.0 344.8 C920.5 350.9 916.6 357.4 913.4 362.4 C910.2 367.4 907.3 371.1 903.8 375.0 C900.3 378.9 896.3 383.1 892.6 385.5 C888.9 387.9 886.2 388.8 881.5 389.5 C876.8 390.2 870.4 390.4 864.5 389.6 C858.6 388.8 852.4 386.7 846.4 384.7 C840.4 382.7 834.4 380.1 828.4 377.5 C822.4 374.9 815.3 371.6 810.3 369.0 C805.3 366.4 802.3 364.9 798.3 361.9 C794.3 358.9 790.2 354.6 786.2 351.0 C782.2 347.4 778.2 344.0 774.2 340.2 C770.2 336.4 766.1 332.0 762.1 328.2 C758.1 324.4 754.0 320.7 750.0 317.3 C746.0 313.9 741.4 310.5 738.0 307.7 C734.6 304.9 731.7 303.1 729.6 300.5 C727.5 297.9 725.4 295.2 725.5 292.0 C725.6 288.8 727.1 284.7 730.5 281.0 C733.9 277.3 739.1 273.5 746.0 270.0 C752.9 266.5 763.2 262.3 772.0 260.0 C780.8 257.7 789.7 256.7 798.5 256.4 C807.3 256.1 817.5 257.1 824.7 258.0 C832.0 258.9 835.5 260.2 842.0 261.6 C848.5 263.0 860.3 265.7 864.0 266.5"/><path d="M1322.8 374.5 C1320.5 376.7 1313.9 383.8 1308.9 387.8 C1303.9 391.8 1298.2 395.5 1292.8 398.5 C1287.4 401.5 1281.1 403.7 1276.8 406.0 C1272.5 408.3 1267.9 410.5 1267.0 412.5 C1266.1 414.5 1268.0 415.5 1271.4 417.8 C1274.8 420.1 1281.2 423.5 1287.5 426.4 C1293.8 429.3 1302.7 433.2 1308.9 435.0 C1315.2 436.8 1322.3 436.7 1325.0 437.0"/><path d="M1295.0 406.0 C1302.5 406.1 1326.1 406.4 1340.0 406.5 C1353.9 406.6 1369.6 407.1 1378.5 406.6 C1387.4 406.1 1391.0 403.9 1393.5 403.4"/></g></svg>
<svg style="left:0;top:0" width="900" height="90"><rect x="3" y="64" width="2" height="2" fill="#6a6a6a"/><rect x="3" y="68" width="2" height="2" fill="#6a6a6a"/><rect x="3" y="72" width="2" height="2" fill="#6a6a6a"/><rect x="3" y="76" width="2" height="2" fill="#6a6a6a"/><path d="M17.5 67.5H24L27.5 71V78.5H17.5Z" fill="#e0e0e0" stroke="#f4f4f4"/><path d="M18.5 68.5H23.5L26.5 71.5V77.5H18.5Z" fill="#d8d8d8" stroke="#2d2d30" stroke-width="0.8"/><g stroke="#d98a1c" stroke-width="1.2"><path d="M16.5 63V72M12 67.5H21M13.5 64.5L19.5 70.5M19.5 64.5L13.5 70.5"/></g><circle cx="16.5" cy="67.5" r="1.8" fill="#fff" stroke="#d98a1c"/><path d="M35.5 70.5H49.5V78.5H35.5Z" fill="#dedede" stroke="#f4f4f4"/><path d="M37 74L47 74L49 78H37Z" fill="#e0b070"/><path d="M36 73C36 68 39 66 43 66M41 64L43.5 66L41 68" stroke="#1e64b8" stroke-width="2" fill="none"/><path d="M57.5 64.5H69L71.5 67V78.5H57.5Z" fill="#0a4fa8" stroke="#f4f4f4"/><rect x="61" y="65" width="6" height="4" fill="#f0f0f0"/><rect x="64" y="65.5" width="1.5" height="2.5" fill="#0a4fa8"/><path d="M80.5 66.5L83 63.5H89L91.5 66.5V78.5H80.5Z" fill="#2d2d30" stroke="#f4f4f4"/><rect x="82.5" y="70" width="3" height="3" fill="#f0f0f0"/><rect x="86.5" y="70" width="3" height="3" fill="#f0f0f0"/><rect x="82.5" y="74" width="3" height="3" fill="#f0f0f0"/><rect x="86.5" y="74" width="3" height="3" fill="#f0f0f0"/><path d="M99.5 62V80" stroke="#4a4a4f"/><path d="M204.5 62V80" stroke="#4a4a4f"/><path d="M231.5 62V80" stroke="#4a4a4f"/><path d="M300.5 62V80" stroke="#4a4a4f"/><path d="M349.5 62V80" stroke="#4a4a4f"/><path d="M398.5 62V80" stroke="#4a4a4f"/><path d="M535.5 62V80" stroke="#4a4a4f"/><path d="M691.5 62V80" stroke="#4a4a4f"/><rect x="110.5" y="63.5" width="9" height="11" fill="#dcdcdc" stroke="#f4f4f4"/><rect x="106.5" y="67.5" width="9" height="11" fill="#dcdcdc" stroke="#f4f4f4"/><rect x="107.5" y="68.5" width="7" height="9" fill="#dcdcdc" stroke="#2d2d30" stroke-width="0.6"/><path d="M130.5 63.5L136 72M141.5 63.5L136 72" stroke="#f0f0f0" stroke-width="1.4"/><circle cx="131.5" cy="75.5" r="2.8" fill="none" stroke="#f0f0f0" stroke-width="1.3"/><circle cx="140.5" cy="75.5" r="2.8" fill="none" stroke="#f0f0f0" stroke-width="1.3"/><path d="M152.5 67.5L155 64H158L160.5 67.5H162.5V78.5H152.5Z" fill="#dcdcdc" stroke="#f4f4f4"/><rect x="149.5" y="71.5" width="6" height="7" fill="#dcdcdc" stroke="#f4f4f4"/><rect x="150.5" y="72.5" width="4" height="5" fill="#e8e8e8" stroke="#2d2d30" stroke-width="0.6"/><path d="M172.5 67.5V72H177M173 71.5C175 66 182 66 182 71C182 74 179 76 176.5 76" stroke="#f0f0f0" stroke-width="1.6" fill="none"/><path d="M199 66.5V71H194.5M198.5 70C197 66 190 66 190 71C190 74 193 76 195.5 76" stroke="#c8c8c8" stroke-width="1.6" fill="none"/><path d="M213.5 64.5H223.5V79L218.5 75L213.5 79Z" fill="#3c3c3c" stroke="#f4f4f4" stroke-width="1.2"/><circle cx="245" cy="71" r="7" fill="#0a4fa8" stroke="#f4f4f4"/><path d="M249 71H241.5M244.5 67.5L241 71L244.5 74.5" stroke="#fff" stroke-width="2" fill="none"/><path d="M263 69.5H269L266 72.5Z" fill="#5a8fd0"/><circle cx="287" cy="71" r="7" fill="#0a4fa8" stroke="#f4f4f4"/><path d="M283 71H290.5M287.5 67.5L291 71L287.5 74.5" stroke="#fff" stroke-width="2" fill="none"/><g fill="none" stroke="#f0f0f0" stroke-width="1"><rect x="308.5" y="64.5" width="12" height="3"/><rect x="312.5" y="67.5" width="8" height="8"/></g><path d="M313 69.5H320M313 71.5H320" stroke="#3cb040" stroke-width="1"/><path d="M313 73.5H320" stroke="#f0f0f0" stroke-width="1"/><g fill="none" stroke="#f0f0f0" stroke-width="1"><rect x="334.5" y="64.5" width="8" height="11"/><path d="M331 67.5C331 64.5 336 64.5 336 67.5C336 69.5 332.5 70 332.5 72.5H336"/></g><path d="M337 67.5H342M337 69.5H342" stroke="#3cb040" stroke-width="1"/><path d="M337 71.5H342" stroke="#f0f0f0" stroke-width="1"/><g fill="#2d2d30" stroke="#f0f0f0" stroke-width="1"><rect x="361.5" y="63.5" width="9" height="3"/><rect x="355.5" y="67.5" width="15" height="3"/><rect x="355.5" y="71.5" width="15" height="3"/><rect x="361.5" y="75.5" width="9" height="2.5"/><rect x="361.5" y="66.5" width="9" height="9" fill="#c8c8c8"/></g><path d="M369 71H363.5M366 68.5L363.5 71L366 73.5" stroke="#262626" stroke-width="1.6" fill="none"/><g fill="#2d2d30" stroke="#f0f0f0" stroke-width="1"><rect x="377.5" y="63.5" width="9" height="3"/><rect x="377.5" y="67.5" width="15" height="3"/><rect x="377.5" y="71.5" width="15" height="3"/><rect x="377.5" y="75.5" width="9" height="2.5"/><rect x="377.5" y="66.5" width="9" height="9" fill="#c8c8c8"/></g><path d="M379 71H384.5M382 68.5L384.5 71L382 73.5" stroke="#262626" stroke-width="1.6" fill="none"/><path d="M408.5 65.5V76.5L417.5 71Z" fill="#2d2d30" stroke="#f4f4f4" stroke-width="1.2"/><path d="M433 65C428 65 427 72 431 75L437 75" stroke="#1d4670" stroke-width="2.6" fill="none"/><path d="M435 72L438 75L435 78" stroke="#1d4670" stroke-width="2.4" fill="none"/><circle cx="439.5" cy="73.5" r="2.5" fill="#2d2d30" stroke="#8a8a8a"/><path d="M455 64C450 64 450 72 453 75L460 76" stroke="#1d4670" stroke-width="2.6" fill="none"/><path d="M458 73L461 76L458 79" stroke="#1d4670" stroke-width="2.4" fill="none"/><circle cx="457.5" cy="68.5" r="2.5" fill="#2d2d30" stroke="#8a8a8a"/><path d="M476 75C472 73 472 67 477 67L483 67" stroke="#1d4670" stroke-width="2.6" fill="none"/><path d="M481 64L484 67L481 70" stroke="#1d4670" stroke-width="2.4" fill="none"/><circle cx="480" cy="75.5" r="2.5" fill="#2d2d30" stroke="#8a8a8a"/><rect x="496.5" y="67.5" width="7" height="7" fill="none" stroke="#8a8a8a"/><circle cx="522" cy="72" r="6.6" fill="none" stroke="#f0f0f0" stroke-width="1.3"/><path d="M518.3 69.5C519.5 66.5 524.5 66.5 525.7 69.5C526.5 72 524.5 74.5 522 74.5C519.5 74.5 518 72.5 518.3 71" fill="none" stroke="#f0f0f0" stroke-width="1.3"/><path d="M520 63.5L523.5 65.5L520 67.5Z" fill="#f0f0f0"/><path d="M858 73H863M858 75.5H863M858.5 76.5L860.5 78.5L862.5 76.5" stroke="#7a7a7a" stroke-width="0.9" fill="none"/></svg>
<div style="left:539px;top:60px;width:150px;height:22px;background:#333337;border:1px solid #434346"></div>
<div class="t" style="left:543px;top:64px;">Debug</div>
<div style="left:680px;top:70px;width:0;height:0;border-left:3px solid transparent;border-right:3px solid transparent;border-top:3px solid #9a9a9a"></div>
<div style="left:699px;top:60px;width:151px;height:22px;background:#333337;border:1px solid #434346"></div>
<div class="t" style="left:703px;top:64px;">Default</div>
<div style="left:840px;top:70px;width:0;height:0;border-left:3px solid transparent;border-right:3px solid transparent;border-top:3px solid #9a9a9a"></div>
<svg style="left:9px;top:93px" width="16" height="15"><rect x="1.5" y="1.5" width="13" height="12" fill="#a8cff0" stroke="#1a1a1a"/><rect x="2" y="4" width="12" height="9" fill="#2a78c8"/><rect x="3.5" y="8.5" width="5" height="3.5" fill="none" stroke="#8a40c8"/><rect x="9.5" y="6.5" width="3" height="3" fill="none" stroke="#8a40c8"/></svg>
<svg style="left:88px;top:93px" width="14" height="16"><path d="M7 1L2 8H6L3.5 14.5L11 6H7L10 1Z" fill="#c0c0c0" stroke="#d8a020" stroke-width="1"/></svg>
<svg style="left:0;top:0" width="960" height="800"><rect x="476" y="752" width="1.5" height="1.5" fill="#6a6a6a"/><rect x="476" y="756" width="1.5" height="1.5" fill="#6a6a6a"/><rect x="476" y="760" width="1.5" height="1.5" fill="#6a6a6a"/><rect x="476" y="764" width="1.5" height="1.5" fill="#6a6a6a"/><rect x="488.5" y="750.5" width="9" height="11" fill="#dcdcdc" stroke="#f4f4f4"/><rect x="484.5" y="754.5" width="9" height="11" fill="#dcdcdc" stroke="#f4f4f4"/><rect x="485.5" y="755.5" width="7" height="9" fill="#dcdcdc" stroke="#2d2d30" stroke-width="0.6"/><path d="M509.5 750.5L514 759M518.5 750.5L514 759" stroke="#f0f0f0" stroke-width="1.3"/><circle cx="510" cy="762.5" r="2.6" fill="none" stroke="#f0f0f0" stroke-width="1.2"/><circle cx="518" cy="762.5" r="2.6" fill="none" stroke="#f0f0f0" stroke-width="1.2"/><path d="M531.5 754.5L534 751H537L539.5 754.5H540.5V765.5H531.5Z" fill="#dcdcdc" stroke="#f4f4f4"/><rect x="528.5" y="758.5" width="6" height="7" fill="#dcdcdc" stroke="#f4f4f4"/><path d="M550.5 753.5V758H555M551 757.5C553 752 560 752 560 757C560 760 557 762 554.5 762" stroke="#f0f0f0" stroke-width="1.6" fill="none"/><path d="M577 752.5V757H572.5M576.5 756C575 752 568 752 568 757C568 760 571 762 573.5 762" stroke="#c8c8c8" stroke-width="1.6" fill="none"/><path d="M583.5 749V767" stroke="#4a4a4f"/><path d="M632.5 749V767" stroke="#4a4a4f"/><path d="M681.5 749V767" stroke="#4a4a4f"/><path d="M709.5 749V767" stroke="#4a4a4f"/><g fill="none" stroke="#8a8a8a" stroke-width="1"><rect x="591.5" y="752.5" width="12" height="3"/><rect x="595.5" y="755.5" width="8" height="8"/></g><path d="M596 757.5H603M596 759.5H603" stroke="#3a7a3a" stroke-width="1"/><path d="M596 761.5H603" stroke="#8a8a8a" stroke-width="1"/><g fill="none" stroke="#8a8a8a" stroke-width="1"><rect x="617.5" y="752.5" width="8" height="11"/><path d="M614 755.5C614 752.5 619 752.5 619 755.5C619 757.5 615.5 758 615.5 760.5H619"/></g><path d="M620 755.5H625M620 757.5H625" stroke="#3a7a3a" stroke-width="1"/><path d="M620 759.5H625" stroke="#8a8a8a" stroke-width="1"/><g fill="#2d2d30" stroke="#8a8a8a" stroke-width="1"><rect x="644.5" y="751.5" width="9" height="3"/><rect x="638.5" y="755.5" width="15" height="3"/><rect x="638.5" y="759.5" width="15" height="3"/><rect x="644.5" y="763.5" width="9" height="2.5"/><rect x="644.5" y="754.5" width="9" height="9" fill="#8f8f8f"/></g><path d="M652 759H646.5M649 756.5L646.5 759L649 761.5" stroke="#262626" stroke-width="1.6" fill="none"/><g fill="#2d2d30" stroke="#8a8a8a" stroke-width="1"><rect x="660.5" y="751.5" width="9" height="3"/><rect x="660.5" y="755.5" width="15" height="3"/><rect x="660.5" y="759.5" width="15" height="3"/><rect x="660.5" y="763.5" width="9" height="2.5"/><rect x="660.5" y="754.5" width="9" height="9" fill="#8f8f8f"/></g><path d="M662 759H667.5M665 756.5L667.5 759L665 761.5" stroke="#262626" stroke-width="1.6" fill="none"/><circle cx="697.5" cy="755" r="5" fill="none" stroke="#8a8a8a" stroke-width="1.3"/><circle cx="697.5" cy="755" r="2.2" fill="#8a8a8a"/><path d="M694 759L689.5 763.5" stroke="#8a8a8a" stroke-width="2.4" stroke-linecap="round"/><path d="M719.5 752.5V763.5L727.5 758Z" fill="none" stroke="#8a8a8a" stroke-width="1.1"/><path d="M735 762H740M735.5 763.5L737.5 765.5L739.5 763.5" stroke="#7a7a7a" stroke-width="0.9" fill="none"/></svg>
</body></html>
